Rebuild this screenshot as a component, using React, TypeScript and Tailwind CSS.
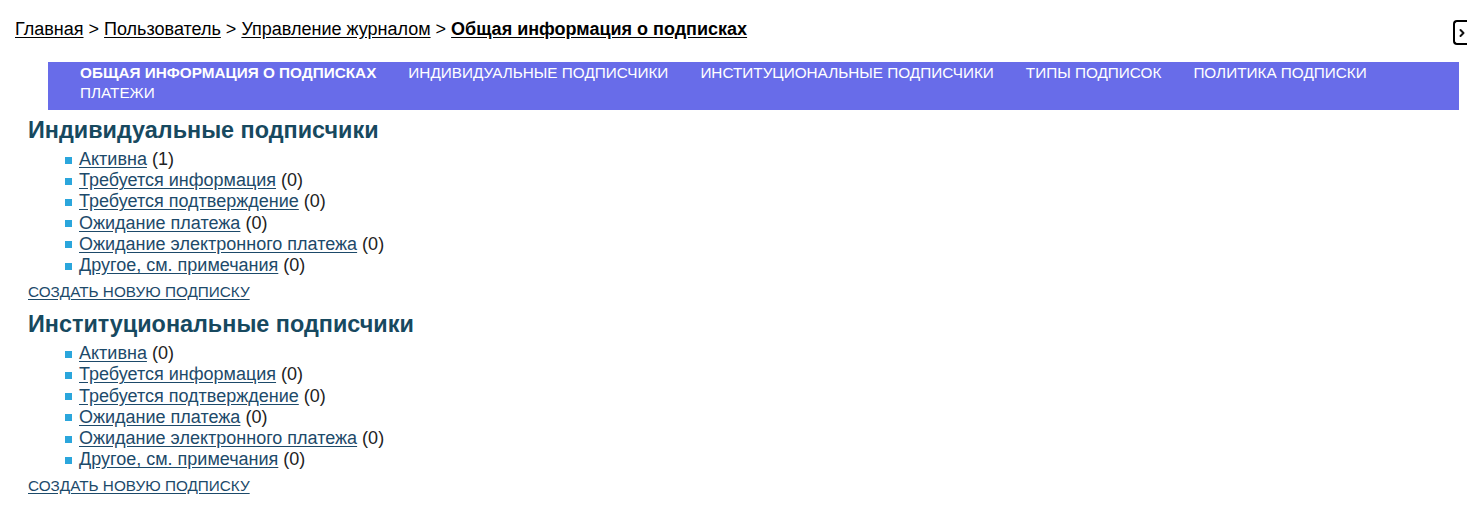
import { ChevronRight } from 'lucide-react';

const tabs = [
  { label: 'Общая информация о подписках', active: true },
  { label: 'Индивидуальные подписчики' },
  { label: 'Институциональные подписчики' },
  { label: 'Типы подписок' },
  { label: 'Политика подписки' },
  { label: 'Платежи' },
];

const statuses = [
  'Требуется информация',
  'Требуется подтверждение',
  'Ожидание платежа',
  'Ожидание электронного платежа',
  'Другое, см. примечания',
];

function Section({ title, active }: { title: string; active: number }) {
  const rows = [{ name: 'Активна', count: active }, ...statuses.map((s) => ({ name: s, count: 0 }))];
  return (
    <div>
      <h2 className="text-[23.4px] font-bold text-[#17495f] leading-[28px]">{title}</h2>
      <ul className="mt-[5px] pl-[37px] text-[18px] leading-[21.2px] text-[#222]">
        {rows.map((r) => (
          <li key={r.name} className="flex items-center">
            <span className="w-[7px] h-[7px] bg-[#2ba6dc] mr-[7px] mt-[1px]" />
            <a href="#" className="text-[#1d4a6a] underline underline-offset-2">{r.name}</a>
            <span className="ml-[5px]">({r.count})</span>
          </li>
        ))}
      </ul>
      <a href="#" className="block mt-[7px] text-[15.3px] leading-[18px] uppercase text-[#1d4a6a] underline underline-offset-2">
        Создать новую подписку
      </a>
    </div>
  );
}

export default function App() {
  return (
    <div className="min-h-[526px] bg-white font-['Liberation_Sans',Arial,sans-serif] text-[#111]">
      <div className="flex items-start justify-between pl-[15px] pt-[18px]">
        <div className="text-[18px] leading-[22px] text-black">
          <a href="#" className="underline underline-offset-2">Главная</a> &gt;{' '}
          <a href="#" className="underline underline-offset-2">Пользователь</a> &gt;{' '}
          <a href="#" className="underline underline-offset-2">Управление журналом</a> &gt;{' '}
          <a href="#" className="underline underline-offset-2 font-bold">Общая информация о подписках</a>
        </div>
        <div className="mt-[2px] w-[14px] h-[25px] border-2 border-r-0 border-black rounded-l-[4px] flex items-center justify-end overflow-hidden">
          <ChevronRight className="w-[12px] h-[12px] -mr-[1px]" strokeWidth={4} />
        </div>
      </div>

      <div className="mt-[17px] ml-[48px] mr-[8px] bg-[#686ce9] pl-[32px] pr-[20px] pt-[1px] pb-[7px]">
        <ul className="flex flex-wrap gap-x-[32px] text-[15.3px] leading-[20px] uppercase text-white">
          {tabs.map((t) => (
            <li key={t.label} className={t.active ? 'font-bold' : ''}>
              {t.label}
            </li>
          ))}
        </ul>
      </div>

      <div className="pl-[28px] pt-[6px] flex flex-col gap-[9px]">
        <Section title="Индивидуальные подписчики" active={1} />
        <Section title="Институциональные подписчики" active={0} />
      </div>
    </div>
  );
}
